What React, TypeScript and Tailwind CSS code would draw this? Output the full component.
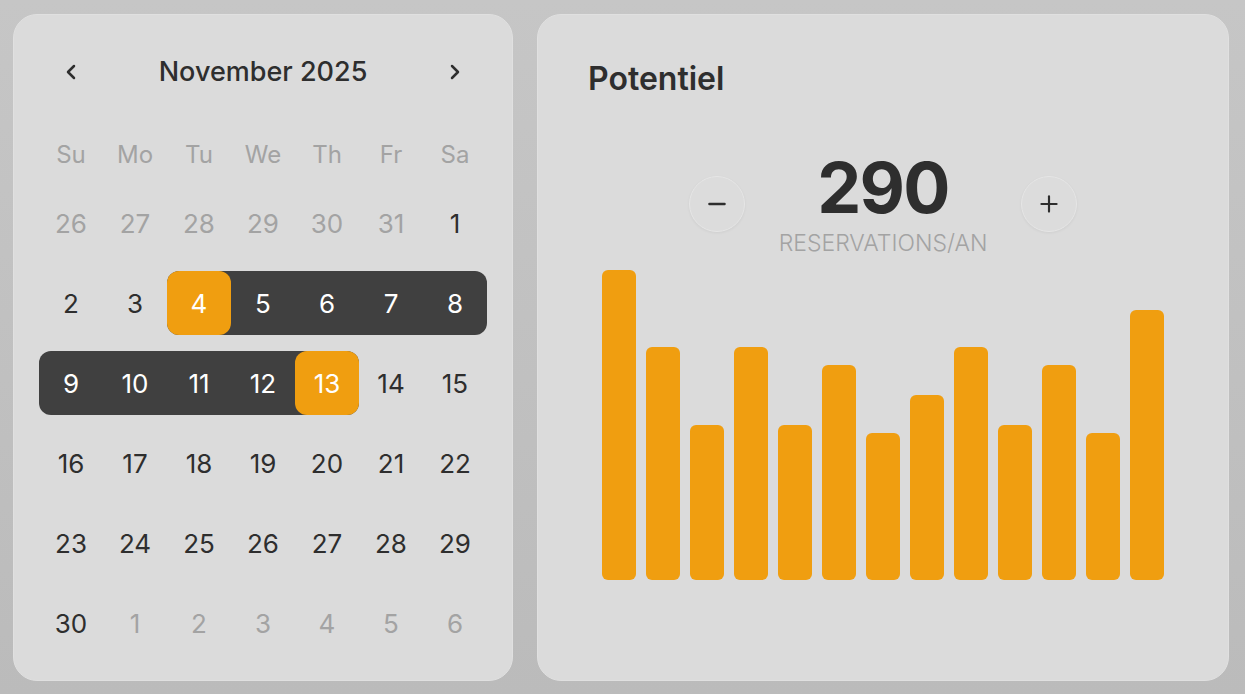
import { ChevronLeft, ChevronRight, Minus, Plus } from "lucide-react";

const weekdays = ["Su", "Mo", "Tu", "We", "Th", "Fr", "Sa"];

type Day = { n: number; muted?: boolean };

const weeks: Day[][] = [
  [{ n: 26, muted: true }, { n: 27, muted: true }, { n: 28, muted: true }, { n: 29, muted: true }, { n: 30, muted: true }, { n: 31, muted: true }, { n: 1 }],
  [{ n: 2 }, { n: 3 }, { n: 4 }, { n: 5 }, { n: 6 }, { n: 7 }, { n: 8 }],
  [{ n: 9 }, { n: 10 }, { n: 11 }, { n: 12 }, { n: 13 }, { n: 14 }, { n: 15 }],
  [{ n: 16 }, { n: 17 }, { n: 18 }, { n: 19 }, { n: 20 }, { n: 21 }, { n: 22 }],
  [{ n: 23 }, { n: 24 }, { n: 25 }, { n: 26 }, { n: 27 }, { n: 28 }, { n: 29 }],
  [{ n: 30 }, { n: 1, muted: true }, { n: 2, muted: true }, { n: 3, muted: true }, { n: 4, muted: true }, { n: 5, muted: true }, { n: 6, muted: true }],
];

const bars = [310, 233, 155, 233, 155, 215, 147, 185, 233, 155, 215, 147, 270];

const START = 4;
const END = 13;

function DayCell({ day }: { day: Day }) {
  const inMonth = !day.muted;
  const isEdge = inMonth && (day.n === START || day.n === END);
  const inRange = inMonth && day.n >= START && day.n <= END;

  let shape = "";
  if (inRange && !isEdge) {
    if (day.n === 8) shape = "bg-[#404040] rounded-r-xl";
    else if (day.n === 9) shape = "bg-[#404040] rounded-l-xl";
    else shape = "bg-[#404040]";
  }

  return (
    <div className={`relative flex h-16 items-center justify-center ${shape}`}>
      {isEdge && (
        <div className={`absolute inset-0 ${day.n === START ? "bg-[#404040] rounded-l-xl" : "bg-[#404040] rounded-r-xl"}`}>
          <div className="h-full w-full rounded-xl bg-[#f09e10]" />
        </div>
      )}
      <span
        className={`relative text-[26px] ${
          day.muted ? "text-[#a3a3a3]" : inRange ? "text-white" : "text-[#2e2e2e]"
        }`}
      >
        {day.n}
      </span>
    </div>
  );
}

function RoundButton({ children }: { children: React.ReactNode }) {
  return (
    <button className="mt-[23px] flex h-14 w-14 items-center justify-center rounded-full border border-[#e6e6e6] bg-[#dcdcdc] text-[#2e2e2e] shadow-[0_1px_3px_rgba(0,0,0,0.06)]">
      {children}
    </button>
  );
}

export default function App() {
  return (
    <div
      className="flex h-[694px] w-[1245px] gap-6 bg-gradient-to-b from-[#c6c6c6] to-[#bbbbbb] pb-[13px] pl-[13px] pr-4 pt-[14px]"
      style={{ fontFamily: "Inter, 'Liberation Sans', sans-serif" }}
    >
      <section className="flex w-[500px] flex-col rounded-3xl border border-[#e0e0e0] bg-[#dbdbdb] px-[25px] pt-[37px]">
        <div className="flex h-[40px] items-center justify-between px-5">
          <ChevronLeft size={24} strokeWidth={2.5} className="text-[#2e2e2e]" />
          <h2 className="text-[27px] font-medium text-[#2e2e2e]">November 2025</h2>
          <ChevronRight size={24} strokeWidth={2.5} className="text-[#2e2e2e]" />
        </div>

        <div className="mt-[47px] grid grid-cols-7">
          {weekdays.map((w) => (
            <div key={w} className="flex h-8 items-center justify-center text-[24px] text-[#a3a3a3]">
              {w}
            </div>
          ))}
        </div>

        <div className="mt-5 flex flex-col gap-4">
          {weeks.map((week, i) => (
            <div key={i} className="grid grid-cols-7">
              {week.map((d, j) => (
                <DayCell key={j} day={d} />
              ))}
            </div>
          ))}
        </div>
      </section>

      <section className="flex flex-1 flex-col rounded-3xl border border-[#e0e0e0] bg-[#dbdbdb] px-[50px] pt-[46px]">
        <h2 className="text-[32px] font-semibold leading-9 text-[#2e2e2e]">Potentiel</h2>

        <div className="mt-[56px] flex flex-col items-center">
          <div className="flex h-[79px] items-start">
            <RoundButton>
              <Minus size={26} strokeWidth={2.2} />
            </RoundButton>
            <div className="w-[276px] text-center text-[70px] font-bold leading-none tracking-tight text-[#2e2e2e]">290</div>
            <RoundButton>
              <Plus size={26} strokeWidth={2} />
            </RoundButton>
          </div>
          <div className="text-[23px] font-light leading-none text-[#a3a3a3]">RESERVATIONS/AN</div>
        </div>

        <div className="mt-[15px] flex h-[310px] items-end gap-[10px] px-[14px]">
          {bars.map((h, i) => (
            <div key={i} className="w-[34px] rounded-md bg-[#f09e10]" style={{ height: h }} />
          ))}
        </div>
      </section>
    </div>
  );
}
